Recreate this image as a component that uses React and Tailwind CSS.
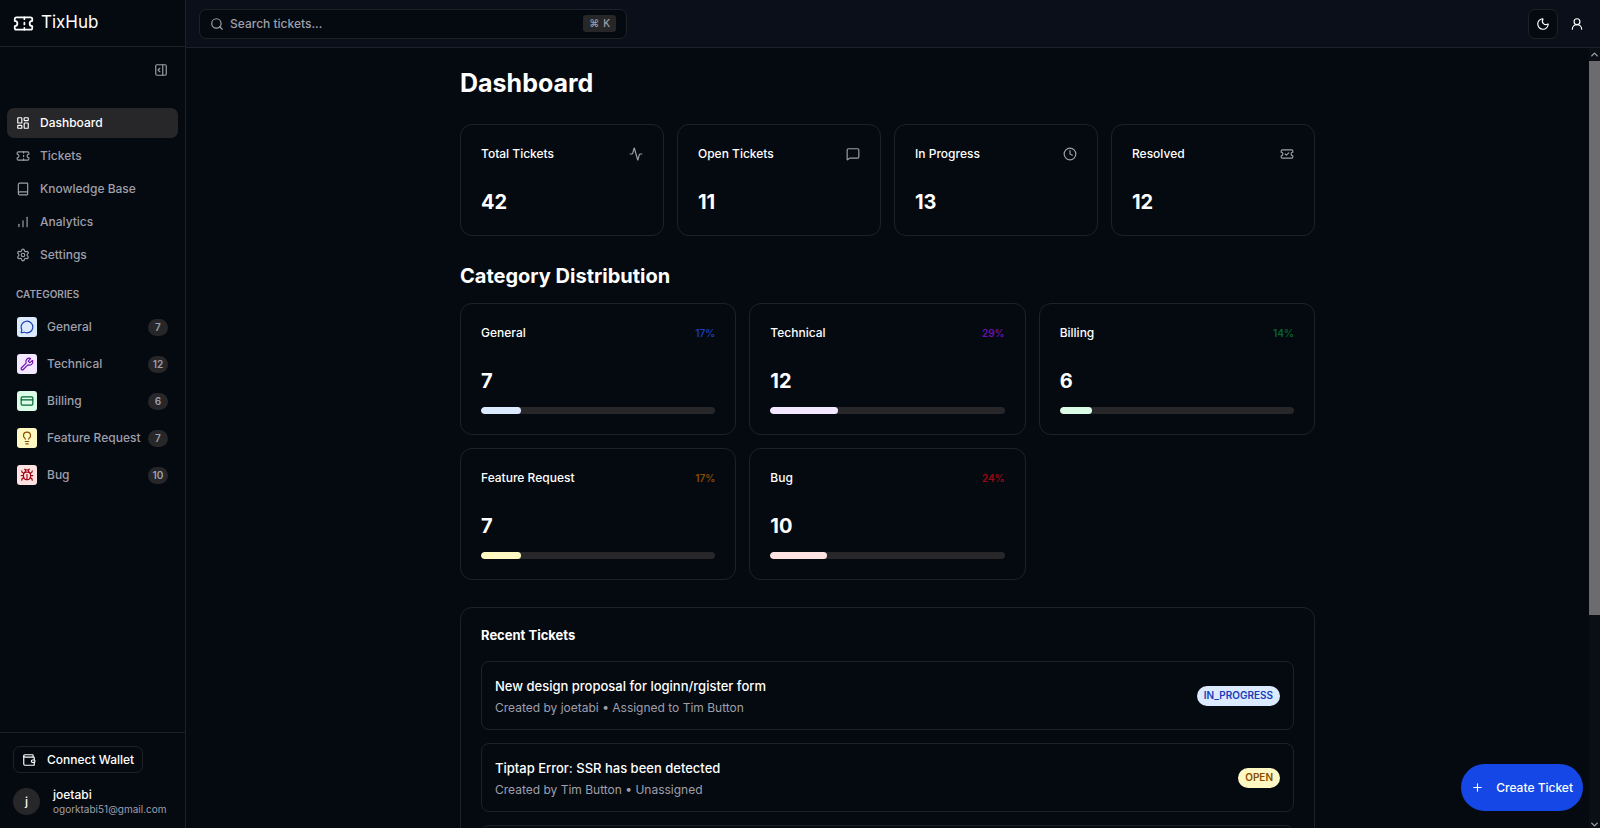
import * as React from "react";
import {
  Activity,
  BookIcon,
  Bug,
  ChevronDown,
  ChevronUp,
  Clock,
  CreditCard,
  LayoutDashboard,
  Lightbulb,
  MessageCircle,
  MessageSquare,
  Moon,
  PanelRightOpen,
  Plus,
  Search,
  Settings,
  Ticket,
  TicketCheck,
  UserRound,
  Wallet,
  Wrench,
} from "lucide-react";

// Three rising bars, shortest on the left
function BarsIcon({ className }) {
  return (
    <svg
      viewBox="0 0 24 24"
      fill="none"
      stroke="currentColor"
      strokeWidth="2"
      strokeLinecap="round"
      strokeLinejoin="round"
      className={className}
    >
      <path d="M5 20v-4" />
      <path d="M12 20V10" />
      <path d="M19 20V4" />
    </svg>
  );
}

const navItems = [
  { label: "Dashboard", icon: LayoutDashboard, active: true },
  { label: "Tickets", icon: Ticket },
  { label: "Knowledge Base", icon: BookIcon },
  { label: "Analytics", icon: BarsIcon },
  { label: "Settings", icon: Settings },
];

const categories = [
  { name: "General", count: 7, percent: 17, icon: MessageCircle, bg: "bg-blue-100", text: "text-blue-800" },
  { name: "Technical", count: 12, percent: 29, icon: Wrench, bg: "bg-purple-100", text: "text-purple-800" },
  { name: "Billing", count: 6, percent: 14, icon: CreditCard, bg: "bg-green-100", text: "text-green-800" },
  { name: "Feature Request", count: 7, percent: 17, icon: Lightbulb, bg: "bg-yellow-100", text: "text-yellow-800" },
  { name: "Bug", count: 10, percent: 24, icon: Bug, bg: "bg-red-100", text: "text-red-800" },
];

const stats = [
  { label: "Total Tickets", value: 42, icon: Activity },
  { label: "Open Tickets", value: 11, icon: MessageSquare },
  { label: "In Progress", value: 13, icon: Clock },
  { label: "Resolved", value: 12, icon: TicketCheck },
];

const tickets = [
  {
    title: "New design proposal for loginn/rgister form",
    meta: "Created by joetabi • Assigned to Tim Button",
    status: "IN_PROGRESS",
    badge: "bg-blue-100 text-blue-800",
  },
  {
    title: "Tiptap Error: SSR has been detected",
    meta: "Created by Tim Button • Unassigned",
    status: "OPEN",
    badge: "bg-yellow-100 text-yellow-800",
  },
];

function Sidebar() {
  return (
    <aside className="flex w-[186px] shrink-0 flex-col border-r border-[#1e2228]">
      <a href="#" className="flex h-[47px] shrink-0 items-center gap-[7px] border-b border-[#1e2228] px-[13px] text-[17px] font-normal text-white">
        <Ticket className="size-[21px]" />
        TixHub
      </a>

      <div className="flex h-[61px] shrink-0 justify-end px-[17px] pt-4">
        <button type="button" aria-label="Collapse sidebar" className="size-[14px] text-zinc-400">
          <PanelRightOpen className="size-[14px]" />
        </button>
      </div>

      <nav className="flex flex-col gap-[3px] px-[7px]">
        {navItems.map(({ label, icon: Icon, active }) => (
          <a
            key={label}
            href="#"
            className={
              active
                ? "flex h-[30px] items-center gap-[10px] rounded-[7px] bg-zinc-800 px-[9px] text-white"
                : "flex h-[30px] items-center gap-[10px] rounded-[7px] px-[9px] text-zinc-400"
            }
          >
            <Icon className="size-[14px]" />
            {label}
          </a>
        ))}
      </nav>

      <div className="px-[7px] pt-4">
        <h2 className="px-[9px] text-[10px] leading-4 font-semibold text-zinc-400">CATEGORIES</h2>
        <div className="flex flex-col gap-[3px] pt-2">
          {categories.map(({ name, count, icon: Icon, bg, text }) => (
            <a key={name} href="#" className="flex h-[34px] items-center gap-[10px] px-[10px] text-zinc-400">
              <span className={`flex size-5 shrink-0 items-center justify-center rounded-[3px] ${bg} ${text}`}>
                <Icon className="size-[14px]" />
              </span>
              <span className="flex-1 whitespace-nowrap">{name}</span>
              <span className="-ml-2 flex h-[17px] min-w-5 items-center justify-center rounded-full bg-zinc-800 px-1 text-[10px] font-semibold">
                {count}
              </span>
            </a>
          ))}
        </div>
      </div>

      <div className="mt-auto flex flex-col items-start gap-[14px] border-t border-[#1e2228] px-[13px] pt-[13px] pb-3">
        <button
          type="button"
          className="flex h-[27px] items-center gap-[11px] rounded-[7px] border border-[#1e2228] px-2 text-white"
        >
          <Wallet className="size-[14px]" />
          Connect Wallet
        </button>
        <div className="flex items-center gap-[13px]">
          <div className="flex size-[27px] items-center justify-center rounded-full bg-zinc-800 text-white">j</div>
          <div>
            <div className="leading-[15px] text-white">joetabi</div>
            <div className="text-[10px] leading-[14px] font-normal text-zinc-400">ogorktabi51@gmail.com</div>
          </div>
        </div>
      </div>
    </aside>
  );
}

function TopBar() {
  return (
    <header className="flex h-12 shrink-0 items-center justify-between border-b border-[#1e2228] bg-[#0b0f19] pr-2 pl-[13px]">
      <label className="flex h-[30px] w-[428px] items-center gap-[6px] rounded-[7px] border border-[#1e2228] bg-[#050a11] px-[10px] text-zinc-400">
        <Search className="size-[14px] shrink-0" />
        <input
          type="text"
          aria-label="Search tickets"
          placeholder="Search tickets..."
          className="min-w-0 flex-1 bg-transparent outline-none placeholder:text-zinc-400"
        />
        <kbd className="flex h-[17px] items-center gap-1 rounded-[3px] bg-zinc-800 px-[6px] font-[Inter,'DejaVu_Sans',sans-serif] text-[10px]">
          <span>⌘</span>K
        </kbd>
      </label>
      <div className="flex items-center gap-1 text-white">
        <button
          type="button"
          aria-label="Toggle theme"
          className="flex size-[30px] items-center justify-center rounded-[7px] border border-[#1e2228] bg-[#050a11]"
        >
          <Moon className="size-[14px]" />
        </button>
        <button type="button" aria-label="Account" className="flex size-[30px] items-center justify-center">
          <UserRound className="size-[14px]" />
        </button>
      </div>
    </header>
  );
}

function Scrollbar() {
  return (
    <div aria-hidden="true" className="flex w-[11px] shrink-0 flex-col items-center bg-[#0b0e15] text-zinc-400">
      <div className="flex h-[13px] shrink-0 items-center">
        <ChevronUp className="size-[11px]" strokeWidth={3} />
      </div>
      <div className="w-full flex-1">
        <div className="h-[73%] bg-[#6b6b70]" />
      </div>
      <div className="flex h-2 shrink-0 items-center">
        <ChevronDown className="size-[11px]" strokeWidth={3} />
      </div>
    </div>
  );
}

export default function App() {
  return (
    <div className="flex h-screen overflow-hidden bg-[#050a11] font-[Inter,sans-serif] text-[12px] font-medium">
      <Sidebar />
      <div className="flex min-w-0 flex-1 flex-col">
        <TopBar />
        <div className="flex min-h-0 flex-1">
          <main className="min-w-0 flex-1 overflow-hidden">
            <div className="mx-auto max-w-[855px] pt-5 text-white">
              <h1 className="text-[25px] leading-[30px] font-bold">Dashboard</h1>

              <section className="mt-[26px] grid grid-cols-4 gap-[13px]">
                {stats.map(({ label, value, icon: Icon }) => (
                  <div key={label} className="rounded-xl border border-[#1e2228] px-5 pt-5 pb-[19px]">
                    <div className="flex h-[18px] items-center justify-between">
                      <h3>{label}</h3>
                      <Icon className="size-[14px] text-zinc-400" />
                    </div>
                    <div className="mt-[26px] text-[20px] leading-[27px] font-bold">{value}</div>
                  </div>
                ))}
              </section>

              <h2 className="mt-[27px] text-[20px] leading-[27px] font-bold">Category Distribution</h2>
              <section className="mt-[13px] grid grid-cols-3 gap-[13px]">
                {categories.map(({ name, count, percent, bg, text }) => (
                  <div key={name} className="rounded-xl border border-[#1e2228] p-5">
                    <div className="flex h-[18px] items-center justify-between">
                      <h3>{name}</h3>
                      <span className={`text-[10px] font-semibold ${text}`}>{percent}%</span>
                    </div>
                    <div className="mt-[26px] text-[20px] leading-[27px] font-bold">{count}</div>
                    <div className="mt-3 h-[7px] overflow-hidden rounded-full bg-zinc-800">
                      <div className={`h-full rounded-full ${bg}`} style={{ width: `${percent}%` }} />
                    </div>
                  </div>
                ))}
              </section>

              <section className="mt-[27px] rounded-xl border border-[#1e2228] p-5">
                <h2 className="text-[13px] leading-[14px] font-bold">Recent Tickets</h2>
                <div className="mt-[19px] flex flex-col gap-[13px]">
                  {tickets.map((ticket) => (
                    <a
                      key={ticket.title}
                      href="#"
                      className="flex h-[69px] items-center justify-between rounded-lg border border-[#1e2228] px-[13px]"
                    >
                      <div>
                        <div className="text-[13px] leading-5">{ticket.title}</div>
                        <div className="mt-[3px] leading-[17px] font-normal text-zinc-400">{ticket.meta}</div>
                      </div>
                      <span className={`flex h-5 items-center rounded-full px-[7px] text-[10px] font-semibold ${ticket.badge}`}>
                        {ticket.status}
                      </span>
                    </a>
                  ))}
                  <div className="h-[69px] rounded-lg border border-[#1e2228]" />
                </div>
              </section>
            </div>
          </main>
          <Scrollbar />
        </div>
      </div>

      <button
        type="button"
        className="fixed right-[17px] bottom-[17px] flex h-[47px] items-center gap-3 rounded-full bg-blue-700 px-[10px] text-white"
      >
        <Plus className="size-[13px]" />
        Create Ticket
      </button>
    </div>
  );
}
